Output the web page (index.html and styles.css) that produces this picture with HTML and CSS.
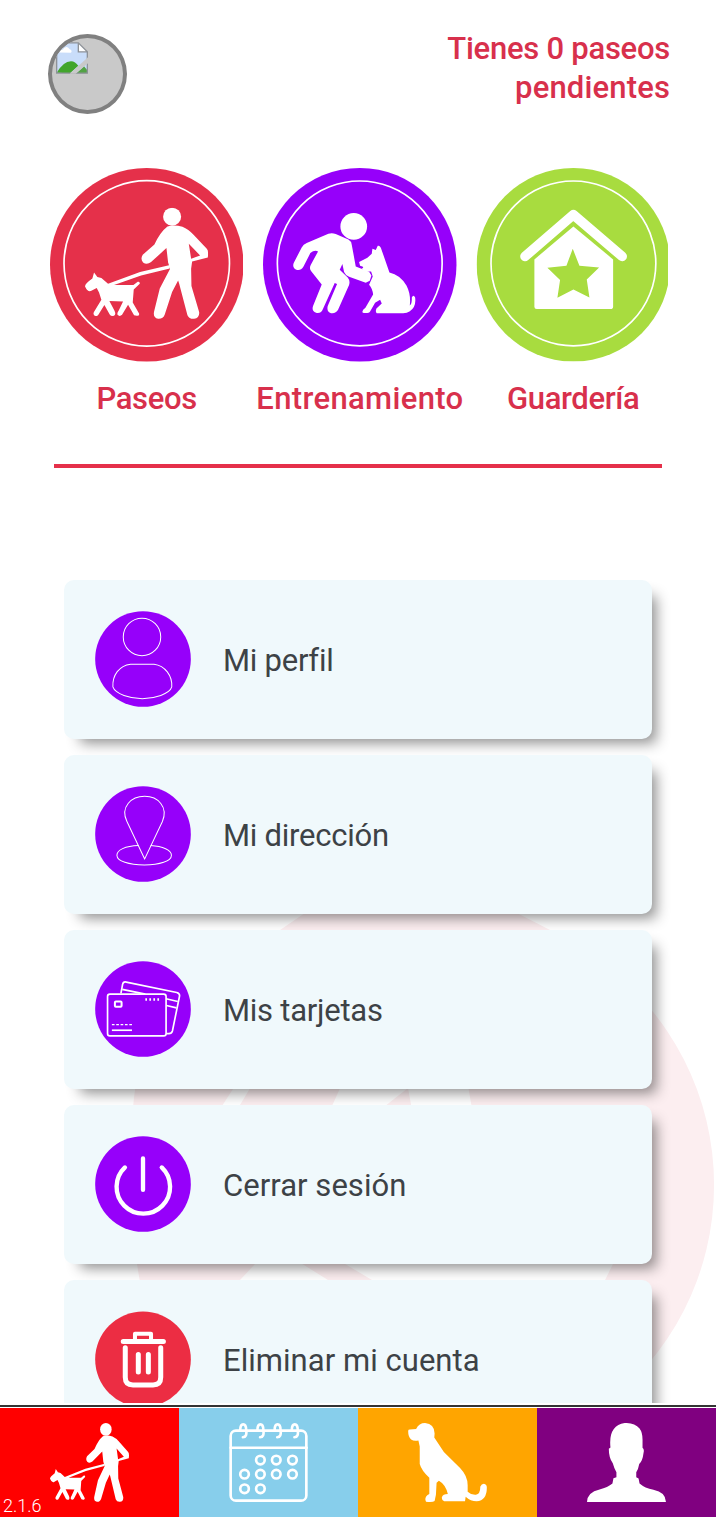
FILE: index.html
```
<!DOCTYPE html>
<html lang="es">

  <head>
    <meta charset="UTF-8">
    <meta name="viewport" content="width=device-width, initial-scale=1.0">
    <title>Mi cuenta</title>
    <link rel="stylesheet" href="styles.css">
  </head>

  <body>
    <svg class="defs" aria-hidden="true">
      <symbol id="walker" viewBox="135 143 369 334" preserveAspectRatio="none">
        <circle cx="396" cy="170" r="27" />
        <path d="M382 199Q402 193 427 200Q445 207 461 225L500 266Q506 272 503 292L456 304L453 326L454 378L477 456Q479 474 462 476Q447 477 442 465L417 370L414 361L396 396L374 463Q369 477 354 476Q338 473 342 454L359 385L390 326L384 307L379 264L333 306Q320 315 309 307Q300 297 308 284L343 253Q360 216 382 199ZM446 251L453 296L480 286Z" />
        <path d="M204 371L300 336L390 315L389 325L303 346L222 375L280 375L293 365Q300 363 299 371L281 388L278 427L297 460Q299 468 290 467L282 465L264 434L246 464Q238 471 232 463Q231 458 236 451L249 424L208 423L223 451Q229 463 222 467Q213 469 209 463L193 435L174 465Q165 471 161 463Q159 459 164 452L184 419L177 397L170 384L154 392Q143 397 135 379Q134 371 157 355L162 337L172 351L184 354Z" />
      </symbol>
    </svg>

    <header class="header">
      <div class="avatar">
        <svg class="broken" viewBox="78 67 96 95">
          <path d="M80 69H145L172 96V160H80Z" fill="#c9ddfa" />
          <path d="M88 98Q86 89 98 90Q108 74 119 88Q128 91 123 99Z" fill="#fff" />
          <path d="M80 159Q100 124 123 124Q136 124 145 138L120 160Z" fill="#42a52c" />
          <path d="M139 160L162 139L172 151V160Z" fill="#52a344" />
          <path d="M145 69V96H172Z" fill="#fff" />
          <path d="M80 69V160H172V96L145 69H80M145 69V96H172" fill="none" stroke="#8e9298" stroke-width="4" />
          <path d="M119 162L174 112V130L137 162Z" fill="#c9c9c9" />
        </svg>
      </div>
      <p class="pending"><span class="pending-count">Tienes 0 paseos</span><br>pendientes</p>
    </header>

    <section class="services">
      <div class="service">
        <svg class="service-icon" viewBox="30 24 580 580">
          <circle cx="320" cy="314" r="290" fill="#e5304a" />
          <circle class="ring" cx="320" cy="310" r="248" />
          <use href="#walker" x="135" y="143" width="369" height="334" fill="#fff" />
        </svg>
        <span class="label-paseos">Paseos</span>
      </div>
      <div class="service">
        <svg class="service-icon" viewBox="22 24 580 580">
          <circle cx="312" cy="314" r="290" fill="#9600fa" />
          <circle class="ring" cx="312" cy="310" r="247" />
          <g fill="#fff">
            <circle cx="294" cy="199" r="40" />
            <path d="M153 249L218 221Q229 217 240 222L278 238Q286 242 288 254L300 319L340 335L347 346L342 362L330 368L280 350Q269 346 265 336L260 312L252 329L276 352Q284 362 280 375L247 449Q240 461 226 459Q212 456 216 438L244 372L237 369L202 446Q197 461 181 458Q167 453 172 438L198 373L166 333Q160 325 165 315L187 274Q176 269 164 279L143 320Q135 333 122 329Q109 323 114 309L138 262Q143 253 153 249Z" />
            <path d="M310 306L335 293L348 281L350 266L360 270L366 257Q373 255 377 268L401 337Q433 344 452 376Q466 403 462 436Q469 431 468 412Q473 402 478 412Q482 441 461 454Q453 460 438 459H363Q358 455 362 445L378 430L373 419L358 428L343 454Q340 460 321 458Q317 451 329 443L352 403Q350 385 340 374L351 349L346 334L327 334L318 326Q329 320 313 317Z" />
          </g>
        </svg>
        <span class="label-entrenamiento">Entrenamiento</span>
      </div>
      <div class="service">
        <svg class="service-icon cut" viewBox="18 24 580 580">
          <circle cx="310" cy="314" r="290" fill="#a8dc3f" />
          <circle class="ring" cx="310" cy="310" r="247" />
          <path d="M165 289L310 164L456 289" fill="none" stroke="#fff" stroke-width="29" stroke-linecap="round" stroke-linejoin="round" />
          <path d="M310 199L429 298V440Q429 447 421 447H200Q193 447 193 440V298Z" fill="#fff" />
          <path d="M308 266L328 317L387 322L350 358L358 412L310 388L262 413L270 360L232 323L289 317Z" fill="#a8dc3f" />
        </svg>
        <span class="label-guarderia">Guardería</span>
      </div>
    </section>

    <hr class="divider">

    <main class="menu">
      <svg class="watermark" viewBox="100 880 616 620">
        <path d="M280 930L305 913Q408 870 515 912L552 931L540 960H260Z" />
        <path d="M137 1075H242L222 1106L200 1140L255 1264L240 1280L200 1330H150Q118 1200 137 1075Z" />
        <path d="M258 1075H346L332 1106L315 1130H225Z" />
        <path d="M380 1110L408 1088L412 1110Z" />
        <path d="M280 1250H322L345 1264L372 1280L400 1300H360L328 1280Z" />
        <path d="M460 1040L600 961.500A276 276 0 0 1 600 1408.500L605 1280L613 1264L625 1230L474 1120Z" />
      </svg>

      <div class="card">
        <svg class="card-icon" viewBox="106 123 286 287">
          <circle cx="249" cy="266.500" r="143" fill="#9600fa" />
          <g class="thin">
            <circle cx="246" cy="200.500" r="56" />
            <path d="M212 282H282C315 286 337 317 335 350C329 371 283 385 247 385C211 385 166 371 159 350C157 315 178 286 212 282Z" />
          </g>
        </svg>
        <span class="card-text">Mi perfil</span>
      </div>
      <div class="card">
        <svg class="card-icon" viewBox="106 108 286 287">
          <circle cx="249" cy="251.500" r="143" fill="#9600fa" />
          <g class="thin">
            <path d="M254 326L201 214C180 171 214 139 254 139C294 139 325 171 307 214Z" />
            <path d="M236 286C195 287 171 300 171 315C171 333 207 344 253 344C299 344 334 333 334 315C334 300 308 288 272 286" />
          </g>
        </svg>
        <span class="card-text">Mi dirección</span>
      </div>
      <div class="card">
        <svg class="card-icon" viewBox="106 108 286 287">
          <circle cx="249" cy="251.500" r="143" fill="#9600fa" />
          <g fill="none" stroke="#fff" stroke-width="5">
            <rect x="143" y="207" width="175" height="125" rx="7" />
            <path d="M183 205L188 178Q190 169 199 171L350 202Q360 205 358 214L337 317Q334 326 325 325H318" />
            <path d="M187 193L256 207M318 221L353 229M319 241L349 248" />
            <rect x="165" y="229" width="20" height="16" rx="3" stroke-width="6" />
            <path d="M256 223H298" stroke-width="8" stroke-dasharray="5 7" />
            <path d="M156 298H216" stroke-width="4" stroke-dasharray="8 5" />
            <path d="M156 315H216" />
          </g>
        </svg>
        <span class="card-text">Mis tarjetas</span>
      </div>
      <div class="card">
        <svg class="card-icon" viewBox="106 108 286 287">
          <circle cx="249" cy="251.500" r="143" fill="#9600fa" />
          <path d="M249 175V269M195 202A80 80 0 1 0 305 202" fill="none" stroke="#fff" stroke-width="13" stroke-linecap="round" />
        </svg>
        <span class="card-text wide">Cerrar sesión</span>
      </div>
      <div class="card">
        <svg class="card-icon" viewBox="106 64 286 287">
          <circle cx="249" cy="208.500" r="143" fill="#ec2d43" />
          <g fill="none" stroke="#fff" stroke-width="15" stroke-linecap="round" stroke-linejoin="round">
            <path d="M190 155H310M196 174V262Q196 285 219 285H279Q302 285 302 262V174M235 194V246M265 194V246" />
            <path d="M225 150V132H273V150" stroke-width="12" />
          </g>
        </svg>
        <span class="card-text wide">Eliminar mi cuenta</span>
      </div>
    </main>

    <nav class="tabs">
      <a class="tab tab-walk">
        <svg class="tab-icon"><use href="#walker" width="79" height="79" fill="#fff" /></svg>
        <span class="version">2.1.6</span>
      </a>
      <a class="tab tab-calendar">
        <svg class="tab-icon" viewBox="687 82 237 239">
          <g fill="none" stroke="#fff" stroke-width="8" stroke-linecap="round">
            <rect x="691" y="105" width="229" height="212" rx="16" />
            <path d="M691 157H921" />
            <path d="M720 104C720 80 738 80 738 104C740 117 737 125 728 125M772 104C772 80 790 80 790 104C792 117 789 125 780 125M824 104C824 80 842 80 842 104C844 117 841 125 832 125M876 104C876 80 894 80 894 104C896 117 893 125 884 125" />
            <circle cx="781" cy="194" r="13" />
            <circle cx="829" cy="194" r="13" />
            <circle cx="878" cy="194" r="13" />
            <circle cx="733" cy="237" r="13" />
            <circle cx="781" cy="237" r="13" />
            <circle cx="829" cy="237" r="13" />
            <circle cx="878" cy="237" r="13" />
            <circle cx="733" cy="281" r="13" />
            <circle cx="781" cy="281" r="13" />
          </g>
        </svg>
      </a>
      <a class="tab tab-dog">
        <svg class="tab-icon" viewBox="155 82 238 239">
          <path d="M155 106Q155 102 160 102L179 100Q188 82 206 82Q235 85 235 114L234 126L263 170L312 218Q335 242 335 270V290Q345 300 360 299Q374 296 373 275Q377 266 384 266Q393 268 393 277Q393 317 362 319Q344 319 329 305L327 319H264Q256 316 257 307Q260 297 275 297Q268 268 248 257L241 263L239 299L235 318Q230 322 209 320Q202 306 219 297V248Q195 225 190 206L190 153L186 135Q172 138 164 132Q155 124 155 106Z" fill="#fff" />
        </svg>
      </a>
      <a class="tab tab-profile">
        <svg class="tab-icon" viewBox="692 82 239 239">
          <path d="M806 82Q836 81 851 99Q861 112 860 138V157Q866 161 863 173Q860 198 850 206Q847 223 841 231V246L848 250L851 265Q867 279 893 284Q930 291 931 321H692Q693 291 730 283Q755 277 769 265L772 249L781 246V231Q774 219 770 204Q758 188 758 160L763 156Q756 90 806 82Z" fill="#fff" />
        </svg>
      </a>
    </nav>
  </body>

</html>
```
FILE: styles.css
```
* {
  box-sizing: border-box;
}

body {
  display: flex;
  flex-direction: column;
  height: 1520px;
  margin: 0;
  padding-bottom: 3px;
  overflow: hidden;
  background-color: #fff;
  font-family: Roboto, "Liberation Sans", sans-serif;
  font-size: 31px;
}

svg {
  display: block;
}

.defs {
  position: absolute;
  width: 0;
  height: 0;
}

.header {
  display: flex;
  justify-content: space-between;
  height: 168px;
  padding: 29px 46px 0 48px;
}

.avatar {
  width: 79px;
  height: 80px;
  margin-top: 5px;
  padding: 4px;
  border: 4px solid #808080;
  border-radius: 50%;
  background-color: #c9c9c9;
  overflow: hidden;
}

.broken {
  width: 32px;
  height: 32px;
}

.pending {
  margin: 0;
  color: #d8304c;
  font-weight: 500;
  letter-spacing: 0.15px;
  line-height: 39px;
  text-align: right;
}

.pending-count {
  letter-spacing: -0.25px;
}

.services {
  display: grid;
  grid-template-columns: repeat(3, 213.300px);
  height: 296px;
  padding: 0 36px 0 40px;
  color: #d8304c;
  font-weight: 500;
}

.service {
  display: flex;
  flex-direction: column;
  align-items: center;
  gap: 18px;
  white-space: nowrap;
}

.service-icon {
  width: 193.500px;
  height: 193.500px;
}

.cut {
  clip-path: inset(0 2px 0 0);
}

.ring {
  fill: none;
  stroke: #fff;
  stroke-width: 5;
}

.label-paseos,
.label-guarderia {
  letter-spacing: -0.35px;
}

.label-entrenamiento {
  letter-spacing: 0.35px;
}

.divider {
  flex: none;
  width: 608px;
  height: 4px;
  margin: 0 54px;
  border: 0;
  background-color: #e5304a;
}

.menu {
  position: relative;
  display: flex;
  flex-direction: column;
  gap: 16px;
  height: 935px;
  padding: 112px 64px 0;
  overflow: hidden;
}

/* faded logo behind the cards */
.watermark {
  position: absolute;
  top: 412px;
  left: 100px;
  width: 616px;
  height: 620px;
  fill: #fceef0;
}

.card {
  position: relative;
  display: flex;
  flex: none;
  align-items: center;
  gap: 32px;
  height: 159px;
  padding: 0 31px;
  border-radius: 10px;
  background-color: #f0f9fc;
  box-shadow: 10px 10px 14px -6px rgba(0, 0, 0, 0.45);
  color: #3d4246;
}

.card-icon {
  width: 96px;
  height: 96px;
  margin-bottom: 1px;
}

.card-text {
  padding-top: 2px;
  letter-spacing: -0.25px;
}

.wide {
  letter-spacing: 0.04px;
}

.thin {
  fill: none;
  stroke: #fff;
  stroke-width: 3;
}

.tabs {
  display: grid;
  grid-template-columns: repeat(4, 1fr);
  height: 112px;
  margin-top: auto;
  padding-top: 1px;
  border-top: 2px solid #333;
}

.tab {
  position: relative;
  display: flex;
  justify-content: center;
  align-items: center;
}

.tab-icon {
  width: 79px;
  height: 79px;
}

.tab-walk {
  background-color: #ff0000;
}

.tab-calendar {
  background-color: #87ceeb;
}

.tab-dog {
  background-color: #ffa500;
}

.tab-profile {
  background-color: #800080;
}

.version {
  position: absolute;
  bottom: 1px;
  left: 3px;
  color: #fff;
  font-size: 18px;
  font-weight: 300;
}
```
